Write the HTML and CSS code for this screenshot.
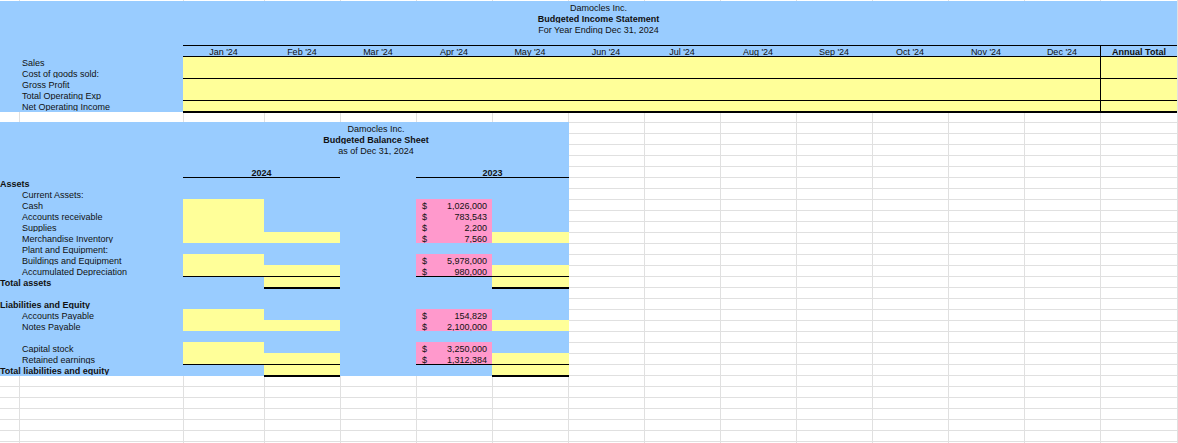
FILE: index.html
```html
<!DOCTYPE html>
<html lang="en">
<head>
    <meta charset="UTF-8">
    <title>Damocles Inc. Budget</title>
    <link rel="stylesheet" href="styles.css">
</head>
<body>
    <div class="sheet income">
        <div class="title">Damocles Inc.</div>
        <div class="title bold">Budgeted Income Statement</div>
        <div class="title">For Year Ending Dec 31, 2024</div>
        <div class="label"></div>

        <div class="label"></div>
        <div class="month rule">Jan '24</div>
        <div class="month rule">Feb '24</div>
        <div class="month rule">Mar '24</div>
        <div class="month rule">Apr '24</div>
        <div class="month rule">May '24</div>
        <div class="month rule">Jun '24</div>
        <div class="month rule">Jul '24</div>
        <div class="month rule">Aug '24</div>
        <div class="month rule">Sep '24</div>
        <div class="month rule">Oct '24</div>
        <div class="month rule">Nov '24</div>
        <div class="month rule">Dec '24</div>
        <div class="month annual bold rule">Annual Total</div>

        <div class="label indent">Sales</div>
        <div class="yellow months rule"></div>
        <div class="yellow annual rule"></div>
        <div class="label indent">Cost of goods sold:</div>
        <div class="yellow months"></div>
        <div class="yellow annual"></div>
        <div class="label indent">Gross Profit</div>
        <div class="yellow months rule"></div>
        <div class="yellow annual rule"></div>
        <div class="label indent">Total Operating Exp</div>
        <div class="yellow months"></div>
        <div class="yellow annual"></div>
        <div class="label indent">Net Operating Income</div>
        <div class="yellow months thick"></div>
        <div class="yellow annual thick"></div>
    </div>

    <div class="sheet balance">
        <div class="title">Damocles Inc.</div>
        <div class="title bold">Budgeted Balance Sheet</div>
        <div class="title">as of Dec 31, 2024</div>
        <div class="label"></div>

        <div class="label"></div>
        <div class="year year-a bold">2024</div>
        <div class="year year-b bold">2023</div>

        <div class="label bold">Assets</div>
        <div class="year-a rule"></div>
        <div class="year-b rule"></div>

        <div class="label indent">Current Assets:</div>

        <div class="label indent">Cash</div>
        <div class="col-c yellow"></div>
        <div class="col-f money"><span>$</span><span>1,026,000</span></div>

        <div class="label indent">Accounts receivable</div>
        <div class="col-c yellow"></div>
        <div class="col-f money"><span>$</span><span>783,543</span></div>

        <div class="label indent">Supplies</div>
        <div class="col-c yellow"></div>
        <div class="col-f money"><span>$</span><span>2,200</span></div>

        <div class="label indent">Merchandise Inventory</div>
        <div class="col-c yellow"></div>
        <div class="col-d yellow"></div>
        <div class="col-f money"><span>$</span><span>7,560</span></div>
        <div class="col-g yellow"></div>

        <div class="label indent">Plant and Equipment:</div>

        <div class="label indent">Buildings and Equipment</div>
        <div class="col-c yellow"></div>
        <div class="col-f money"><span>$</span><span>5,978,000</span></div>

        <div class="label indent">Accumulated Depreciation</div>
        <div class="col-c yellow"></div>
        <div class="col-d yellow"></div>
        <div class="col-f money"><span>$</span><span>980,000</span></div>
        <div class="col-g yellow"></div>

        <div class="label bold">Total assets</div>
        <div class="col-c rule"></div>
        <div class="col-d yellow thick"></div>
        <div class="col-f rule"></div>
        <div class="col-g yellow thick"></div>

        <div class="label"></div>

        <div class="label bold">Liabilities and Equity</div>

        <div class="label indent">Accounts Payable</div>
        <div class="col-c yellow"></div>
        <div class="col-f money"><span>$</span><span>154,829</span></div>

        <div class="label indent">Notes Payable</div>
        <div class="col-c yellow"></div>
        <div class="col-d yellow"></div>
        <div class="col-f money"><span>$</span><span>2,100,000</span></div>
        <div class="col-g yellow"></div>

        <div class="label"></div>

        <div class="label indent">Capital stock</div>
        <div class="col-c yellow"></div>
        <div class="col-f money"><span>$</span><span>3,250,000</span></div>

        <div class="label indent">Retained earnings</div>
        <div class="col-c yellow"></div>
        <div class="col-d yellow"></div>
        <div class="col-f money"><span>$</span><span>1,312,384</span></div>
        <div class="col-g yellow"></div>

        <div class="label bold">Total liabilities and equity</div>
        <div class="col-c rule"></div>
        <div class="col-d yellow thick"></div>
        <div class="col-f rule"></div>
        <div class="col-g yellow thick"></div>
    </div>
</body>
</html>
```

FILE: styles.css
```css
* {
    margin: 0;
    padding: 0;
    box-sizing: border-box;
}

html, body {
    height: 443px;
    overflow: hidden;
}

/* empty spreadsheet gridlines behind the two blocks */
body {
    padding-top: 1px;
    font-family: "Liberation Sans", Arial, sans-serif;
    font-size: 9px;
    color: #111;
    background-color: white;
    background-image:
        linear-gradient(#e0e0e0, #e0e0e0), linear-gradient(#e0e0e0, #e0e0e0),
        linear-gradient(#e0e0e0, #e0e0e0), linear-gradient(#e0e0e0, #e0e0e0),
        linear-gradient(#e0e0e0, #e0e0e0), linear-gradient(#e0e0e0, #e0e0e0),
        linear-gradient(#e0e0e0, #e0e0e0), linear-gradient(#e0e0e0, #e0e0e0),
        linear-gradient(#e0e0e0, #e0e0e0), linear-gradient(#e0e0e0, #e0e0e0),
        linear-gradient(#e0e0e0, #e0e0e0), linear-gradient(#e0e0e0, #e0e0e0),
        linear-gradient(#e0e0e0, #e0e0e0), linear-gradient(#e0e0e0, #e0e0e0),
        linear-gradient(#e0e0e0, #e0e0e0),
        repeating-linear-gradient(transparent 0 1px, #e0e0e0 1px 2px, transparent 2px 11px);
    background-repeat: no-repeat;
    background-size:
        1px 100%, 1px 100%, 1px 100%, 1px 100%, 1px 100%,
        1px 100%, 1px 100%, 1px 100%, 1px 100%, 1px 100%,
        1px 100%, 1px 100%, 1px 100%, 1px 100%, 1px 100%,
        100% 100%;
    background-position:
        19px 0, 183px 0, 264px 0, 340px 0, 416px 0,
        492px 0, 568px 0, 644px 0, 720px 0, 796px 0,
        872px 0, 948px 0, 1024px 0, 1100px 0, 1177px 0,
        0 0;
}

.sheet {
    display: grid;
    grid-auto-rows: 11px;
    padding-bottom: 1px;
    background: #99ccff;
}

.sheet > div {
    height: 11px;
    line-height: 14px;
    white-space: nowrap;
    overflow: hidden;
}

.income {
    width: 1177px;
    grid-template-columns: 183px 81px repeat(11, 76px) 77px;
}

.balance {
    width: 569px;
    margin-top: 10px;
    grid-template-columns: 183px 81px 76px 76px 76px 77px;
}

.title {
    grid-column: 2 / -1;
    text-align: center;
}

.income .title {
    grid-column: 1 / -1;
    padding-left: 20px;
}

.label {
    grid-column: 1;
}

.indent {
    padding-left: 22px;
}

.bold {
    font-weight: bold;
}

.month {
    text-align: center;
}

.months {
    grid-column: 2 / span 12;
}

.annual {
    grid-column: 14;
    border-left: 1px solid black;
}

.year {
    text-align: center;
}

.year-a {
    grid-column: 2 / span 2;
}

.year-b {
    grid-column: 5 / span 2;
}

.col-c { grid-column: 2; }
.col-d { grid-column: 3; }
.col-f { grid-column: 5; }
.col-g { grid-column: 6; }

.yellow {
    background: #ffff99;
}

.money {
    display: flex;
    justify-content: space-between;
    padding: 0 5px 0 6px;
    background: #ff99cc;
}

.rule {
    box-shadow: inset 0 1px 0 black;
}

.sheet > .thick {
    overflow: visible;
    box-shadow: inset 0 1px 0 black, 0 2px 0 black;
}
```
